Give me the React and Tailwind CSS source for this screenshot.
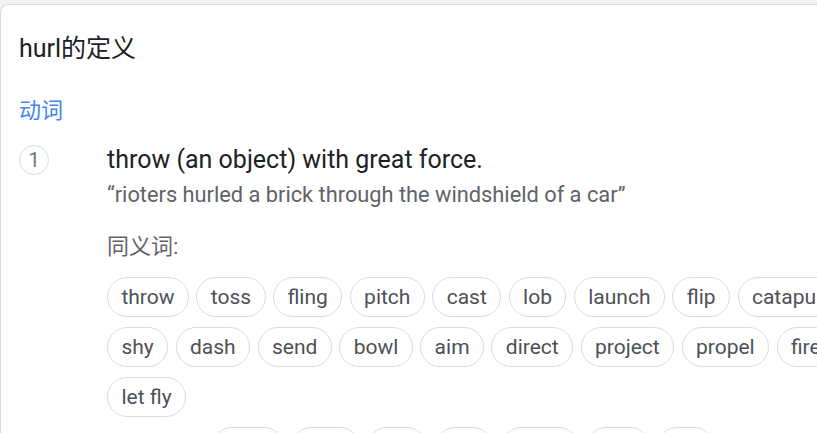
import React from 'react';

const synonyms = [
  'throw', 'toss', 'fling', 'pitch', 'cast', 'lob', 'launch', 'flip', 'catapult',
  'shy', 'dash', 'send', 'bowl', 'aim', 'direct', 'project', 'propel', 'fire',
  'let fly',
];

const related = ['utter', 'vent', 'yell', 'fire', 'voice', 'spit', 'cry'];

function Chip({ children }) {
  return (
    <span className="flex h-10 items-center whitespace-nowrap rounded-full border border-[#dadce0] px-[13.4px] text-[21px] leading-none text-[#4d5156]">
      {children}
    </span>
  );
}

export default function App() {
  return (
    <div className="h-[433px] w-[817px] overflow-hidden bg-[#f1f3f4] pt-[4px] font-['Roboto','Noto_Sans_CJK_SC',sans-serif]">
      <div className="h-full w-[900px] rounded-tl-lg border-l border-t border-[#dadce0] bg-white pl-[18px]">
        <h1 className="pt-[28px] text-[25px] leading-[32px] text-[#202124]">hurl的定义</h1>

        <div className="mt-[31px] text-[22px] leading-[30px] text-[#4285f4]">动词</div>

        <div className="mt-[19px] flex">
          <div className="flex h-[30px] w-[30px] shrink-0 items-center justify-center rounded-full border border-[#dadce0] text-[20px] leading-none text-[#70757a]">
            1
          </div>
          <div className="ml-[58px]">
            <div className="text-[25px] leading-[30px] text-[#202124]">throw (an object) with great force.</div>
            <div className="mt-[5px] text-[21.8px] leading-[30px] text-[#5f6368]">
              “rioters hurled a brick through the windshield of a car”
            </div>

            <div className="mt-[22px] text-[22px] leading-[30px] text-[#5f6368]">同义词:</div>
            <div className="mt-[15px] flex w-[750px] flex-wrap gap-x-[7.5px] gap-y-[10px]">
              {synonyms.map((s) => (
                <Chip key={s}>{s}</Chip>
              ))}
            </div>

            <div className="mt-[10px] flex items-center gap-x-[7.5px]">
              <span className="w-[97px] text-[21px] text-[#5f6368]">相似词:</span>
              {related.map((s) => (
                <Chip key={s}>{s}</Chip>
              ))}
            </div>
          </div>
        </div>
      </div>
    </div>
  );
}
